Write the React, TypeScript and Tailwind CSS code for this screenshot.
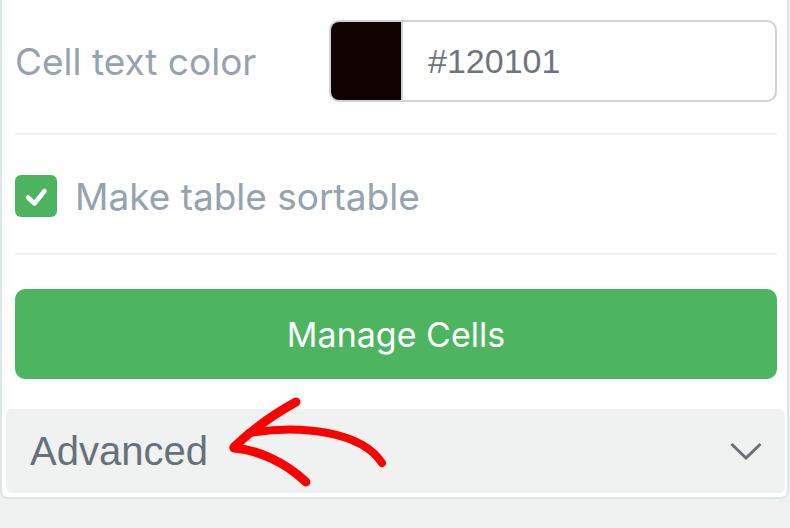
export default function App() {
  return (
    <div className="w-[790px] h-[528px] bg-[#eff1f0] overflow-hidden" style={{ fontFamily: 'Inter, sans-serif' }}>
      <div className="relative w-[789px] bg-white border-x-2 border-b-2 border-[#dde6e7] rounded-b-lg pb-[4px]">
        <div className="pl-[13px] pr-[10px] pt-[20px]">
          {/* Cell text color */}
          <div className="flex items-center justify-between h-[82px]">
            <span className="text-[37px] text-[#95a3ae] leading-none">Cell text color</span>
            <div className="flex w-[448px] h-[82px] rounded-[10px] border-2 border-[#cdd3d8] overflow-hidden">
              <div className="w-[72px] bg-[#120101] border-r-2 border-[#cdd3d8]" />
              <div
                className="flex items-center pl-[25px] text-[34px] text-[#6c757d]"
                style={{ fontFamily: '"Liberation Sans", Arial, sans-serif' }}
              >
                #120101
              </div>
            </div>
          </div>

          <div className="h-[2px] bg-[#eef0f0] mt-[31px]" />

          {/* Sortable */}
          <div className="flex items-center gap-[18px] mt-[40px] h-[42px]">
            <div className="w-[42px] h-[42px] rounded-[6px] bg-[#4cb45e] flex items-center justify-center">
              <svg width="26" height="26" viewBox="0 0 26 26" fill="none">
                <path d="M5 14.5l6.5 6L21.5 8" stroke="white" strokeWidth="4.5" strokeLinecap="round" strokeLinejoin="round" />
              </svg>
            </div>
            <span className="text-[37px] text-[#95a3ae] leading-none">Make table sortable</span>
          </div>

          <div className="h-[2px] bg-[#eef0f0] mt-[36px]" />

          <button className="mt-[34px] w-full h-[90px] rounded-[10px] bg-[#4db560] text-white text-[34px] flex items-center justify-center">
            Manage Cells
          </button>
        </div>

        {/* Advanced */}
        <div
          className="mt-[30px] ml-[4px] mr-[2px] h-[84px] rounded-[6px] bg-[#f0f2f1] flex items-center justify-between pl-[24px] pr-[23px]"
          style={{ fontFamily: '"Liberation Sans", Arial, sans-serif' }}
        >
          <span className="text-[40px] text-[#687179] leading-none">Advanced</span>
          <svg width="32" height="18" viewBox="0 0 32 18" fill="none">
            <path d="M1.5 2 L16 16 L30.5 2" stroke="#687179" strokeWidth="3" strokeLinejoin="miter" />
          </svg>
        </div>

        {/* annotation arrow */}
        <svg className="absolute left-0 top-0 pointer-events-none" width="790" height="528" fill="none">
          <path d="M294 402 C272 414 250 430 232 447" stroke="#ff0000" strokeWidth="9" strokeLinecap="round" />
          <path d="M232 448 C256 450 283 462 304 482" stroke="#ff0000" strokeWidth="9" strokeLinecap="round" />
          <path d="M247 433 C300 424 360 432 380 463" stroke="#ff0000" strokeWidth="8" strokeLinecap="round" />
        </svg>
      </div>
    </div>
  );
}
